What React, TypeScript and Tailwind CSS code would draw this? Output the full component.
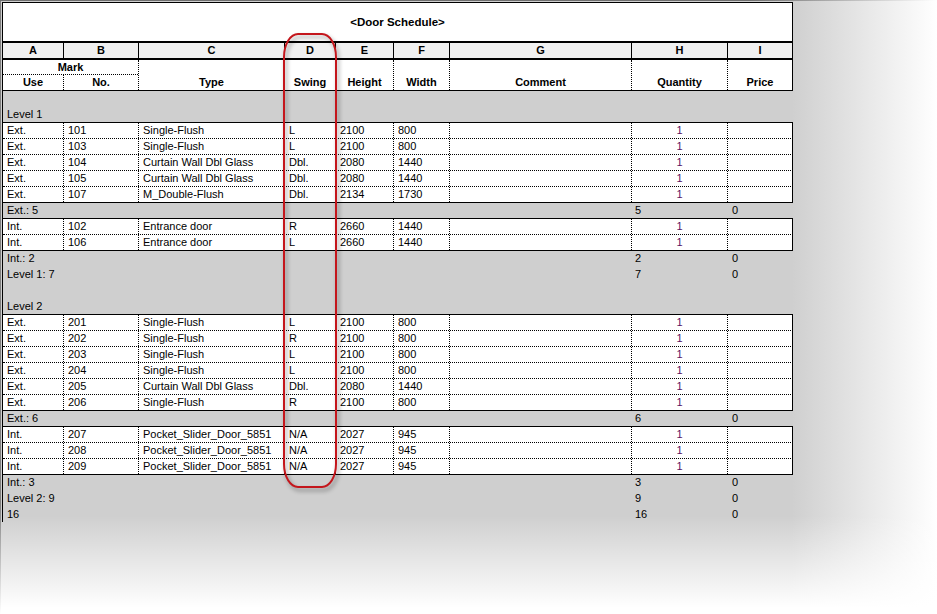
import React from "react";

// Revit-style door schedule with a red callout around the Swing column

type Door = [string, string, string, string, string, string];

type Line =
  | { kind: "blank" }
  | { kind: "label"; text: string }
  | { kind: "group"; rows: Door[] }
  | { kind: "total"; text: string; qty: string; price: string };

const sf = (use: string, no: string, swing: string): Door => [use, no, "Single-Flush", swing, "2100", "800"];
const cw = (use: string, no: string): Door => [use, no, "Curtain Wall Dbl Glass", "Dbl.", "2080", "1440"];
const ps = (no: string): Door => ["Int.", no, "Pocket_Slider_Door_5851", "N/A", "2027", "945"];

const lines: Line[] = [
  { kind: "blank" },
  { kind: "label", text: "Level 1" },
  {
    kind: "group",
    rows: [
      sf("Ext.", "101", "L"),
      sf("Ext.", "103", "L"),
      cw("Ext.", "104"),
      cw("Ext.", "105"),
      ["Ext.", "107", "M_Double-Flush", "Dbl.", "2134", "1730"],
    ],
  },
  { kind: "total", text: "Ext.: 5", qty: "5", price: "0" },
  {
    kind: "group",
    rows: [
      ["Int.", "102", "Entrance door", "R", "2660", "1440"],
      ["Int.", "106", "Entrance door", "L", "2660", "1440"],
    ],
  },
  { kind: "total", text: "Int.: 2", qty: "2", price: "0" },
  { kind: "total", text: "Level 1: 7", qty: "7", price: "0" },
  { kind: "blank" },
  { kind: "label", text: "Level 2" },
  {
    kind: "group",
    rows: [
      sf("Ext.", "201", "L"),
      sf("Ext.", "202", "R"),
      sf("Ext.", "203", "L"),
      sf("Ext.", "204", "L"),
      cw("Ext.", "205"),
      sf("Ext.", "206", "R"),
    ],
  },
  { kind: "total", text: "Ext.: 6", qty: "6", price: "0" },
  { kind: "group", rows: [ps("207"), ps("208"), ps("209")] },
  { kind: "total", text: "Int.: 3", qty: "3", price: "0" },
  { kind: "total", text: "Level 2: 9", qty: "9", price: "0" },
  { kind: "total", text: "16", qty: "16", price: "0" },
];

const cols = "grid grid-cols-[60px_75px_146px_51px_58px_56px_182px_96px_65px]";
const dot = "border-l border-dotted border-black";
const letters = ["A", "B", "C", "D", "E", "F", "G", "H", "I"];
const labels = ["Type", "Swing", "Height", "Width", "Comment", "Quantity", "Price"];

function DoorRow({ door, first }: { door: Door; first: boolean }) {
  const cells = [door[1], door[2], door[3], door[4], door[5], ""];
  return (
    <div
      className={`${cols} h-[16px] border-r border-solid border-black bg-white ${
        first ? "border-t" : "border-t border-t-black [border-top-style:dotted]"
      }`}
    >
      <div className="overflow-hidden whitespace-nowrap pl-[4px]">{door[0]}</div>
      {cells.map((v, i) => (
        <div key={i} className={`${dot} overflow-hidden whitespace-nowrap pl-[4px]`}>
          {v}
        </div>
      ))}
      <div className={`${dot} text-center text-[#5a1062]`}>1</div>
      <div className={dot}></div>
    </div>
  );
}

export default function App() {
  // the first body row carries the header's bottom rule
  let prevRule = true;

  return (
    <div className="flex h-[614px] w-[937px] flex-col overflow-hidden bg-[image:linear-gradient(to_bottom,rgba(255,255,255,0)_84%,#ffffff_99%),linear-gradient(to_right,#cfcfcf_84.5%,#ffffff_100%)] font-['Liberation_Sans',Arial,sans-serif] text-[11px] leading-[15px] text-black">
      {/* frame edge */}
      <div className="h-px w-full shrink-0 bg-[linear-gradient(to_right,#6f6f6f_80%,#ffffff)]"></div>
      <div className="relative flex flex-1">
        <div className="w-px shrink-0 bg-[linear-gradient(to_bottom,#7d7d7d_82%,#ffffff)]"></div>
        <div className="w-px shrink-0"></div>

        <div className="pt-px">
          <div className="w-[791px] border-l border-black">
            {/* title */}
            <div className="flex h-[40px] items-center justify-center border-y border-r border-black bg-white text-[11.5px] font-bold">
              &lt;Door Schedule&gt;
            </div>

            {/* column letters */}
            <div className={`${cols} h-[18px] border-t border-r border-b-2 border-black bg-[#f0f0f0] font-bold`}>
              {letters.map((l, i) => (
                <div key={l} className={`text-center ${i > 0 ? "border-l border-black" : ""}`}>
                  {l}
                </div>
              ))}
            </div>

            {/* field headers */}
            <div className={`${cols} h-[30px] border-r border-black bg-white font-bold`}>
              <div className="col-span-2 flex flex-col">
                <div className="h-[15px] border-b border-dotted border-black text-center leading-[14px]">Mark</div>
                <div className="grid flex-1 grid-cols-[60px_75px]">
                  <div className="text-center">Use</div>
                  <div className={`${dot} text-center`}>No.</div>
                </div>
              </div>
              {labels.map((l) => (
                <div key={l} className={`${dot} flex items-end justify-center`}>
                  {l}
                </div>
              ))}
            </div>

            {/* body */}
            {lines.map((line, idx) => {
              const top = prevRule ? "border-t-black" : "border-t-transparent";
              prevRule = line.kind === "group";
              if (line.kind === "group") {
                return (
                  <div key={idx}>
                    {line.rows.map((d, i) => (
                      <DoorRow key={d[1]} door={d} first={i === 0} />
                    ))}
                  </div>
                );
              }
              if (line.kind === "total") {
                return (
                  <div key={idx} className={`${cols} h-[16px] border-t ${top}`}>
                    <div className="col-span-7 pl-[4px]">{line.text}</div>
                    <div className="pl-[4px]">{line.qty}</div>
                    <div className="pl-[5px]">{line.price}</div>
                  </div>
                );
              }
              return (
                <div key={idx} className={`h-[16px] border-t pl-[4px] ${top}`}>
                  {line.kind === "label" ? line.text : ""}
                </div>
              );
            })}
          </div>
        </div>

        {/* red callout around Swing column */}
        <div className="pointer-events-none absolute left-[283px] top-[32px] h-[455px] w-[54px] rounded-[15px/24px] border-2 border-[#c4161c] drop-shadow-[2px_3px_2px_rgba(0,0,0,0.4)]"></div>
      </div>
    </div>
  );
}
